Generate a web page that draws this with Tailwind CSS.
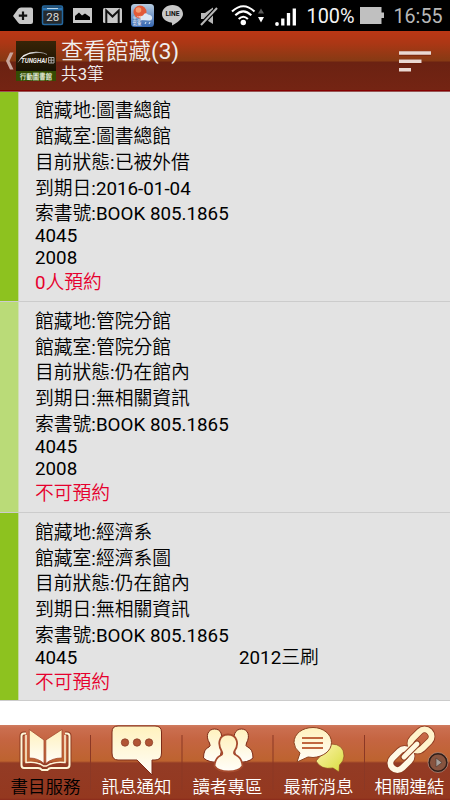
<!DOCTYPE html>
<html lang="zh-Hant">
<head>
    <meta charset="UTF-8">
    <meta name="viewport" content="width=device-width, initial-scale=1.0">
    <title>查看館藏</title>
    <script src="https://cdn.jsdelivr.net/npm/@tailwindcss/browser@4"></script>
</head>
<body class="w-[450px] h-[800px] overflow-hidden bg-white flex flex-col font-[Roboto,'Noto_Sans_CJK_TC_DemiLight','Noto_Sans_CJK_TC',sans-serif]">

    <!-- Status bar -->
    <div class="h-[31px] shrink-0 bg-black">
        <svg class="block w-[450px] h-[31px]" viewBox="0 0 450 31">
            <path d="M13 16 L18 9 Q19 7.500 21 7.500 H31 Q33 7.500 33 9.500 V22 Q33 24 31 24 H21 Q19 24 18 22.500 Z" fill="#c8c8c8"/>
            <path d="M23 11.500 V20 M18.800 15.700 H27.200" stroke="#111" stroke-width="2.200"/>
            <!-- Calendar -->
            <rect x="42.500" y="6" width="20" height="18.500" rx="1.500" fill="#252a2e" stroke="#2468a0" stroke-width="1.500"/>
            <path d="M43 9 H62" stroke="#2a75b5" stroke-width="3"/>
            <path d="M47 8.500 H58" stroke="#b9d5e8" stroke-width="1"/>
            <text x="52.700" y="21" text-anchor="middle" textLength="13" lengthAdjust="spacingAndGlyphs" font-size="10.500" fill="#d8d8d8">28</text>
            <!-- Gallery -->
            <rect x="73" y="8" width="19" height="15" fill="#c8c8c8"/>
            <path d="M75 20 V16 L79 12.500 L82 15.500 L85 13.500 L90 17 V20 Z" fill="#000"/>
            <!-- Mail -->
            <rect x="103" y="8" width="19" height="15" rx="1.500" fill="#c8c8c8"/>
            <path d="M106.300 23 V10.500 L112.500 16.500 L118.700 10.500 V23" fill="none" stroke="#111" stroke-width="2"/>
            <!-- Weather -->
            <linearGradient id="sky" x2="0" y2="1">
                <stop stop-color="#b8cde0"/>
                <stop offset="1" stop-color="#3465b0"/>
            </linearGradient>
            <rect x="131" y="4" width="23" height="23" rx="3.500" fill="url(#sky)"/>
            <circle cx="140" cy="12" r="6.500" fill="#e25a38"/>
            <circle cx="138.500" cy="10" r="2.800" fill="#f49a70"/>
            <path d="M141 20 Q139 16 143 15.500 Q145 11.500 148 14.500 Q153 15 152 19 Q151 21 149 20.500 Z" fill="#dce8f4"/>
            <text x="132.500" y="19.800" font-size="4.500" fill="#fff">生活</text>
            <text x="132.500" y="24.800" font-size="4.500" fill="#fff">氣象</text>
            <path d="M146 22 l-1 2 M150 22 l-1 2" stroke="#dce8f4"/>
            <!-- LINE -->
            <path d="M172.500 5 C178.500 5 183 9 183 14 C183 18.500 177 23 172 25.500 Q172.500 23 171.500 22.500 C166 22 162 18.500 162 14 C162 9 166.500 5 172.500 5 Z" fill="#c8c8c8"/>
            <text x="172.500" y="16.300" text-anchor="middle" textLength="14" lengthAdjust="spacingAndGlyphs" font-size="6.500" font-weight="700" fill="#111">LINE</text>
            <!-- Muted -->
            <path d="M201 13 H205 L213 7.500 V24 L205 19 H201 Z" fill="#b8b8b8"/>
            <path d="M218 7 L200 26" stroke="#000" stroke-width="4.500"/>
            <path d="M217 8 L201 25" stroke="#b8b8b8" stroke-width="2"/>
            <!-- Wifi -->
            <g fill="none" stroke="#fff" stroke-width="2.100">
                <path d="M232 11.500 Q243.300 1 254.500 11.500"/>
                <path d="M235.300 15.300 Q243.300 7.500 251.300 15.300"/>
                <path d="M238.700 19 Q243.300 14.500 247.900 19"/>
            </g>
            <circle cx="243.300" cy="22.500" r="2.700" fill="#fff"/>
            <path d="M258 13.500 L261 8.500 L264 13.500 Z" fill="#5a5a5a"/>
            <path d="M258 17 L261 22.500 L264 17 Z" fill="#fff"/>
            <!-- Signal -->
            <circle cx="277" cy="24" r="1.900" fill="#fff"/>
            <path d="M282.800 25.500 V18.500 M288.500 25.500 V13 M294.300 25.500 V8.500" stroke="#fff" stroke-width="3.300"/>
            <text x="306.500" y="23" textLength="48" lengthAdjust="spacingAndGlyphs" font-size="20.500" fill="#f4f4f4">100%</text>
            <!-- Battery -->
            <path d="M360 7 H381.500 V12.500 H384 V18 H381.500 V24 H360 Z" fill="#c0c0c0"/>
            <text x="393.500" y="23" textLength="49" lengthAdjust="spacingAndGlyphs" font-size="20.500" fill="#b8b8b8">16:55</text>
        </svg>
    </div>

    <!-- Header -->
    <header class="h-[61px] shrink-0 flex items-start bg-[linear-gradient(#bb3715_0,#ac3715_12px,#863a14_30px,#6b2212_31px,#742413_59px,#850000_59px,#850000_60px,#aaa_61px)] text-[#f0eeee]">
        <svg class="w-[15px] h-[60px] shrink-0" viewBox="0 0 15 60">
            <path d="M10 21.500 H13.500 L9.500 30 L13.500 38.500 H10 L6 30 Z" fill="#c9a59b"/>
        </svg>
        <svg class="w-[41px] h-[60px] shrink-0" viewBox="0 0 41 60">
            <linearGradient id="logo" x2="0" y2="1">
                <stop stop-color="#382407"/>
                <stop offset="1" stop-color="#171103"/>
            </linearGradient>
            <rect x="1" y="10" width="40" height="31" fill="url(#logo)"/>
            <rect x="1" y="40" width="40" height="10" fill="#354c04"/>
            <path d="M2.500 32 Q9 18 28 21.500 Q13 20.500 5.500 28.500 Z" fill="#eee"/>
            <path d="M16 22.500 Q26 20 32 23.500" fill="none" stroke="#aaa" stroke-width=".8"/>
            <text x="6" y="32" textLength="26" lengthAdjust="spacingAndGlyphs" font-size="8" font-weight="700" font-style="italic" fill="#eee">TUNGHAI</text>
            <path d="M33.500 26.500 h5.500 v5.500 h-5.500 z M33.500 29.200 h5.500 M36.200 26.500 v5.500" stroke="#aaa" fill="none" stroke-width="1"/>
            <text x="5" y="47.700" textLength="32" font-size="6.300" font-weight="700" fill="#dce3cd">行動圖書館</text>
        </svg>
        <div class="grow pl-[5px] pt-[7px]">
            <h1 class="text-[22.5px] leading-[27px]">查看館藏(3)</h1>
            <p class="text-[16.7px] leading-[20px]">共3筆</p>
        </div>
        <svg class="w-[60px] h-[60px] shrink-0" viewBox="390 31 60 60">
            <path d="M399 53.500 H431 M399 61.700 H421.500 M399 70.200 H411" stroke="#6b1b08" stroke-width="5" opacity=".5"/>
            <path d="M399 53 H431 M399 61.200 H421.500 M399 69.700 H411" stroke="#ead8d2" stroke-width="3.500"/>
        </svg>
    </header>

    <!-- Holdings list -->
    <main class="grow text-[18.8px] leading-[25.7px] text-black">
        <section class="h-[210px] flex bg-[#e3e3e3] border-b border-[#ccc]">
            <div class="w-[19px] bg-[#8dc21f] border-r border-[#c4d7a0]"></div>
            <div class="pl-4 pt-[7.4px]">
                <p>館藏地:圖書總館</p>
                <p>館藏室:圖書總館</p>
                <p>目前狀態:已被外借</p>
                <p>到期日:2016-01-04</p>
                <p>索書號:BOOK 805.1865</p>
                <p class="-mt-[3px] leading-[22px]">4045</p>
                <p class="leading-[22px]">2008</p>
                <p class="pt-[2px] text-[#e6002d]">0人預約</p>
            </div>
        </section>
        <section class="h-[211px] flex bg-[#e3e3e3] border-b border-[#ccc]">
            <div class="w-[19px] bg-[#badb78] border-r border-[#d0dfb5]"></div>
            <div class="pl-4 pt-2">
                <p>館藏地:管院分館</p>
                <p>館藏室:管院分館</p>
                <p>目前狀態:仍在館內</p>
                <p>到期日:無相關資訊</p>
                <p>索書號:BOOK 805.1865</p>
                <p class="-mt-[3px] leading-[22px]">4045</p>
                <p class="leading-[22px]">2008</p>
                <p class="pt-[2px] text-[#e6002d]">不可預約</p>
            </div>
        </section>
        <section class="h-[188px] flex bg-[#e3e3e3] border-b border-[#ccc]">
            <div class="w-[19px] bg-[#8dc21f] border-r border-[#c4d7a0]"></div>
            <div class="pl-4 pt-2">
                <p>館藏地:經濟系</p>
                <p>館藏室:經濟系圖</p>
                <p>目前狀態:仍在館內</p>
                <p>到期日:無相關資訊</p>
                <p>索書號:BOOK 805.1865</p>
                <p class="-mt-[3px] leading-[22px] flex"><span class="w-[204px]">4045</span><span>2012三刷</span></p>
                <p class="pt-[2px] text-[#e6002d]">不可預約</p>
            </div>
        </section>
    </main>

    <!-- Bottom tabs -->
    <nav class="relative h-[75px] shrink-0 bg-[linear-gradient(#d07c60_0,#cb6f50_3px,#c56542_14px,#bd632f_36px,#933b25_38px,#94381f_73px,#8a2b1b_75px)]">
        <svg class="w-0 h-0 absolute">
            <linearGradient id="cream" x2="0" y2="1">
                <stop stop-color="#fff1bd"/>
                <stop offset="1" stop-color="#fffefa"/>
            </linearGradient>
            <linearGradient id="lime" x2="1" y2="1">
                <stop stop-color="#fff4b0"/>
                <stop offset="1" stop-color="#d7dc3c"/>
            </linearGradient>
        </svg>
        <div class="h-full w-[455px] grid grid-cols-5 text-[17.5px] leading-[22px] text-white text-center">
            <a class="flex flex-col items-center">
                <svg class="w-[91px] h-[51px]" viewBox="0 725 91 51">
                    <path d="M26 733.500 H24 Q21.500 733.500 21.500 736 V765 Q21.500 768 24 768 H38 Q40.500 768 42 770 H47.500 Q49 768 51 768 H66.500 Q69.500 768 69.500 765 V736 Q69.500 733.500 67 733.500 H65" fill="none" stroke="#8d3b21" stroke-width="4"/>
                    <path d="M26 733.500 H24 Q21.500 733.500 21.500 736 V765 Q21.500 768 24 768 H38 Q40.500 768 42 770 H47.500 Q49 768 51 768 H66.500 Q69.500 768 69.500 765 V736 Q69.500 733.500 67 733.500 H65" fill="none" stroke="#fff6d8" stroke-width="2"/>
                    <path d="M26 735 V762.500 Q37 761 43.500 766 H46.500 Q54 761 65 762.500 V735" fill="none" stroke="#fff6d8" stroke-width="1.500"/>
                    <path d="M29.300 729.500 L44 740 V763.500 Q38 758 29.300 758 Z M62 729.500 L45.800 740 V763.500 Q52 758 62 758 Z" fill="url(#cream)" stroke="#a54a2d" stroke-width=".8"/>
                </svg>
                <span class="text-black">書目服務</span>
            </a>
            <a class="flex flex-col items-center">
                <svg class="w-[91px] h-[51px]" viewBox="91 725 91 51">
                    <path d="M118 726 H155 Q161.500 726 161.500 732 V753 Q161.500 760 155 760 H152 V775 L137 760 H118 Q112 760 112 753 V732 Q112 726 118 726 Z" fill="url(#cream)" stroke="#7d2b18" stroke-width="1"/>
                    <g fill="#b15535" stroke="#8b3e28" stroke-width=".8">
                        <circle cx="125" cy="742.500" r="3.700"/>
                        <circle cx="137" cy="742.500" r="3.700"/>
                        <circle cx="149" cy="742.500" r="3.700"/>
                    </g>
                </svg>
                <span>訊息通知</span>
            </a>
            <a class="flex flex-col items-center">
                <svg class="w-[91px] h-[51px]" viewBox="182 725 91 51">
                    <g fill="url(#cream)" stroke="#7d2b18" stroke-width="1">
                        <path d="M209.500 743 C205 736 208 729 214.500 729 C221 729 223.500 735 220 743 Q219 746 222 748 L219 762 Q209 763 203.500 758 Q203.500 749 209 747 Q211 746 209.500 743 Z"/>
                        <path d="M236 743 C232 736 235 729 241.500 729 C248 729 250.500 736 246.500 743 Q245 746 247.500 747 Q253 749 253 758 Q248 763 237 762 L234 748 Q237 746 236 743 Z"/>
                        <path d="M222 752 C217 744 219 734.500 228 734.500 C237 734.500 239.500 744 234.500 751 Q233 754 236 755 Q242 758 242.500 766 Q239 771.500 228.500 771.500 Q218 771.500 214.500 766 Q215 758 220.500 755.500 Q223 754.500 222 752 Z" stroke="#a74b2e" stroke-width="1.800"/>
                    </g>
                </svg>
                <span>讀者專區</span>
            </a>
            <a class="flex flex-col items-center">
                <svg class="w-[91px] h-[51px]" viewBox="273 725 91 51">
                    <path d="M331 744 Q344 744 344 756 Q344 761 339.500 765 L339 772 L333 768 Q321 770 316 761 Z" fill="url(#lime)" stroke="#8d4320" stroke-width=".7"/>
                    <path d="M313 727.500 C323 727.500 331.500 734 331.500 742.500 C331.500 751 323 757 313 757.500 L308 757 L297 762 L300 753 Q294 748 294 742.500 C294 734 302 727.500 313 727.500 Z" fill="url(#cream)" stroke="#8d4320" stroke-width="1"/>
                    <path d="M302 738 H323 M302 743 H323 M302 748 H323" stroke="#c0673f" stroke-width="2"/>
                </svg>
                <span>最新消息</span>
            </a>
            <a class="flex flex-col items-center">
                <svg class="w-[91px] h-[51px]" viewBox="364 725 91 51">
                    <g fill="none" stroke-linecap="round">
                        <g stroke="#8d3b21" stroke-width="7.500">
                            <rect x="389" y="752.500" width="24" height="14" rx="7" transform="rotate(-45 401 759.500)"/>
                            <rect x="409" y="733" width="24" height="14" rx="7" transform="rotate(-45 421 740)"/>
                        </g>
                        <rect x="389" y="752.500" width="24" height="14" rx="7" transform="rotate(-45 401 759.500)" stroke="#fff9e5" stroke-width="6"/>
                        <rect x="409" y="733" width="24" height="14" rx="7" transform="rotate(-45 421 740)" stroke="#fff3cb" stroke-width="6"/>
                        <path d="M404 757 L417 744" stroke="#914022" stroke-width="7"/>
                        <path d="M404 757 L417 744" stroke="#fff8e0" stroke-width="4.800"/>
                    </g>
                </svg>
                <span>相關連結</span>
            </a>
        </div>
        <!-- Separators and scroll hint lie over the tabs -->
        <svg class="absolute inset-0 w-[450px] h-[75px]" viewBox="0 725 450 75">
            <path d="M90.500 735 V790 M182 735 V790 M273 735 V790 M364.500 735 V790" stroke="#8b3825" stroke-width="1"/>
            <circle cx="438" cy="762.500" r="9" fill="#87543f" stroke="#2e1d18" stroke-width="1.800"/>
            <circle cx="438" cy="762.500" r="10" fill="none" stroke="#b79182" stroke-width=".7"/>
            <path d="M436 758 L442 762.500 L436 767 Z" fill="#a5a09b" stroke="#553b30" stroke-width=".7"/>
        </svg>
    </nav>
</body>
</html>
